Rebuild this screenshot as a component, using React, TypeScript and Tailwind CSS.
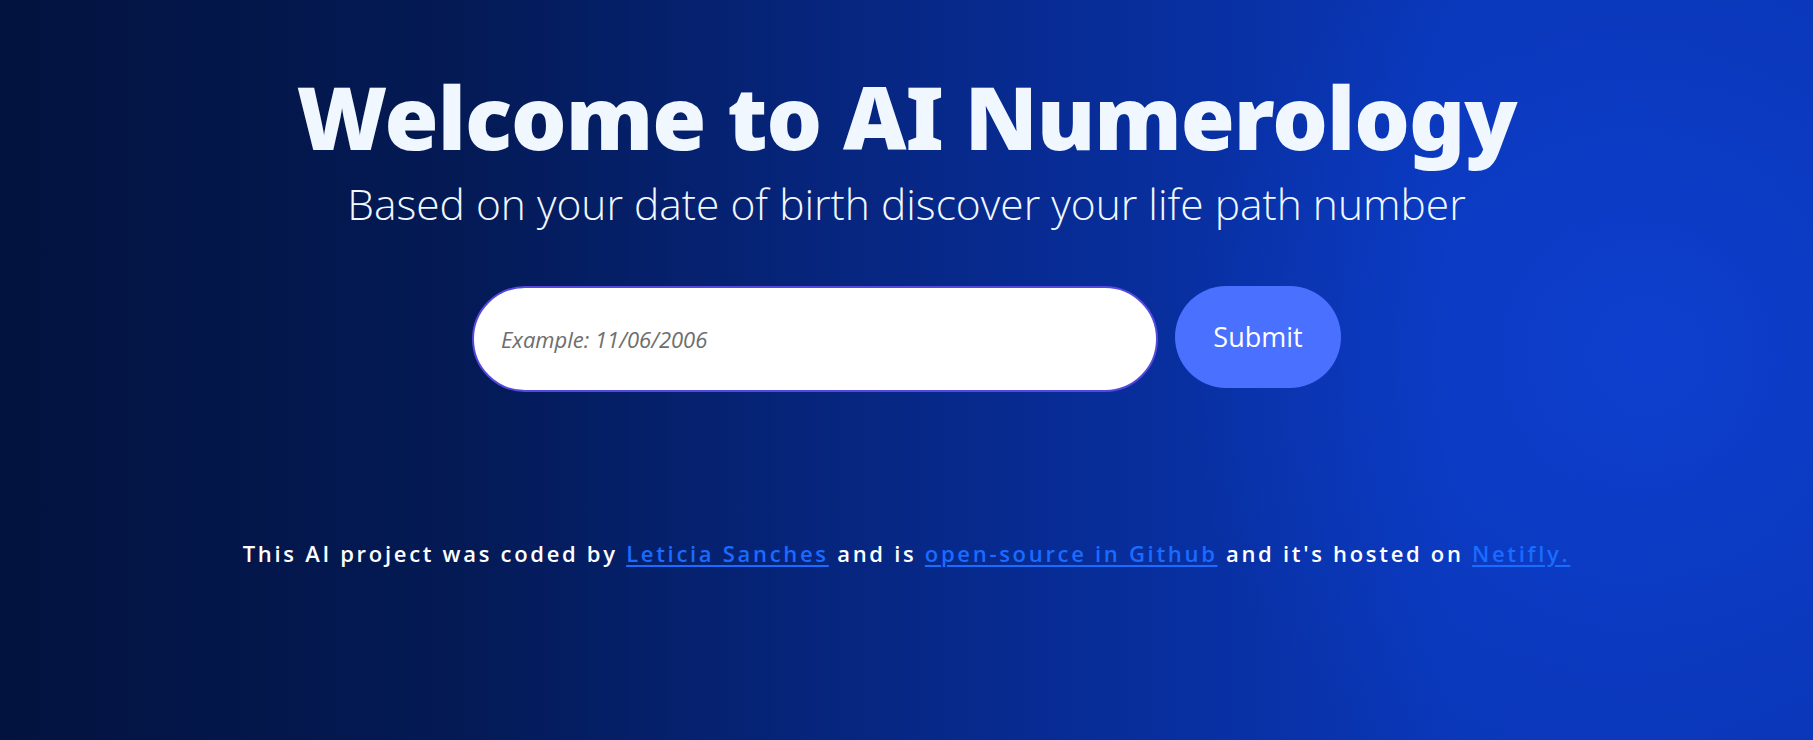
import React from "react";

export default function App() {
  return (
    <div
      className="relative w-full h-[740px] overflow-hidden bg-[linear-gradient(90deg,#03133f_0%,#041a55_25%,#072a8f_55%,#0a37b8_80%,#0a36b6_100%)]"
      style={{ fontFamily: '"Noto Sans", "Open Sans", sans-serif' }}
    >
      <div className="absolute inset-0 bg-[radial-gradient(circle_at_91%_48%,rgba(16,70,225,0.55)_0%,rgba(16,70,225,0)_28%)]" />
      <main className="relative flex flex-col items-center pt-[66px]">
        <h1 className="text-[#f0f7ff] text-[87.5px] font-black leading-[100px] tracking-[-1px]">
          Welcome to AI Numerology
        </h1>
        <p
          className="text-[#f0f7ff] text-[42.5px] font-light leading-[56px] mt-[10px]"
          style={{ fontFamily: '"Open Sans", "Noto Sans", sans-serif' }}
        >
          Based on your date of birth discover your life path number
        </p>
        <form className="flex items-start gap-[17px] mt-[54px]" onSubmit={(e) => e.preventDefault()}>
          <input
            type="text"
            placeholder="Example: 11/06/2006"
            className="w-[686px] h-[106px] rounded-full bg-white border-2 border-[#5448de] pl-[27px] text-[22px] italic text-[#333] placeholder:text-[#6e6e6e] outline-none"
            style={{ fontFamily: '"Open Sans", "Noto Sans", sans-serif' }}
          />
          <button
            type="submit"
            className="w-[166px] h-[102px] rounded-full bg-[#4a70ff] text-white text-[27px]"
            style={{ fontFamily: '"Open Sans", "Noto Sans", sans-serif' }}
          >
            Submit
          </button>
        </form>
        <footer
          className="mt-[145px] text-white text-[22px] font-semibold tracking-[2.7px]"
          style={{ fontFamily: '"Open Sans", "Noto Sans", sans-serif' }}
        >
          This AI project was coded by{" "}
          <a href="#" className="text-[#1a6bff] underline underline-offset-[3px]">
            Leticia Sanches
          </a>{" "}
          and is{" "}
          <a href="#" className="text-[#1a6bff] underline underline-offset-[3px]">
            open-source in Github
          </a>{" "}
          and it's hosted on{" "}
          <a href="#" className="text-[#1a6bff] underline underline-offset-[3px]">
            Netifly.
          </a>
        </footer>
      </main>
    </div>
  );
}
